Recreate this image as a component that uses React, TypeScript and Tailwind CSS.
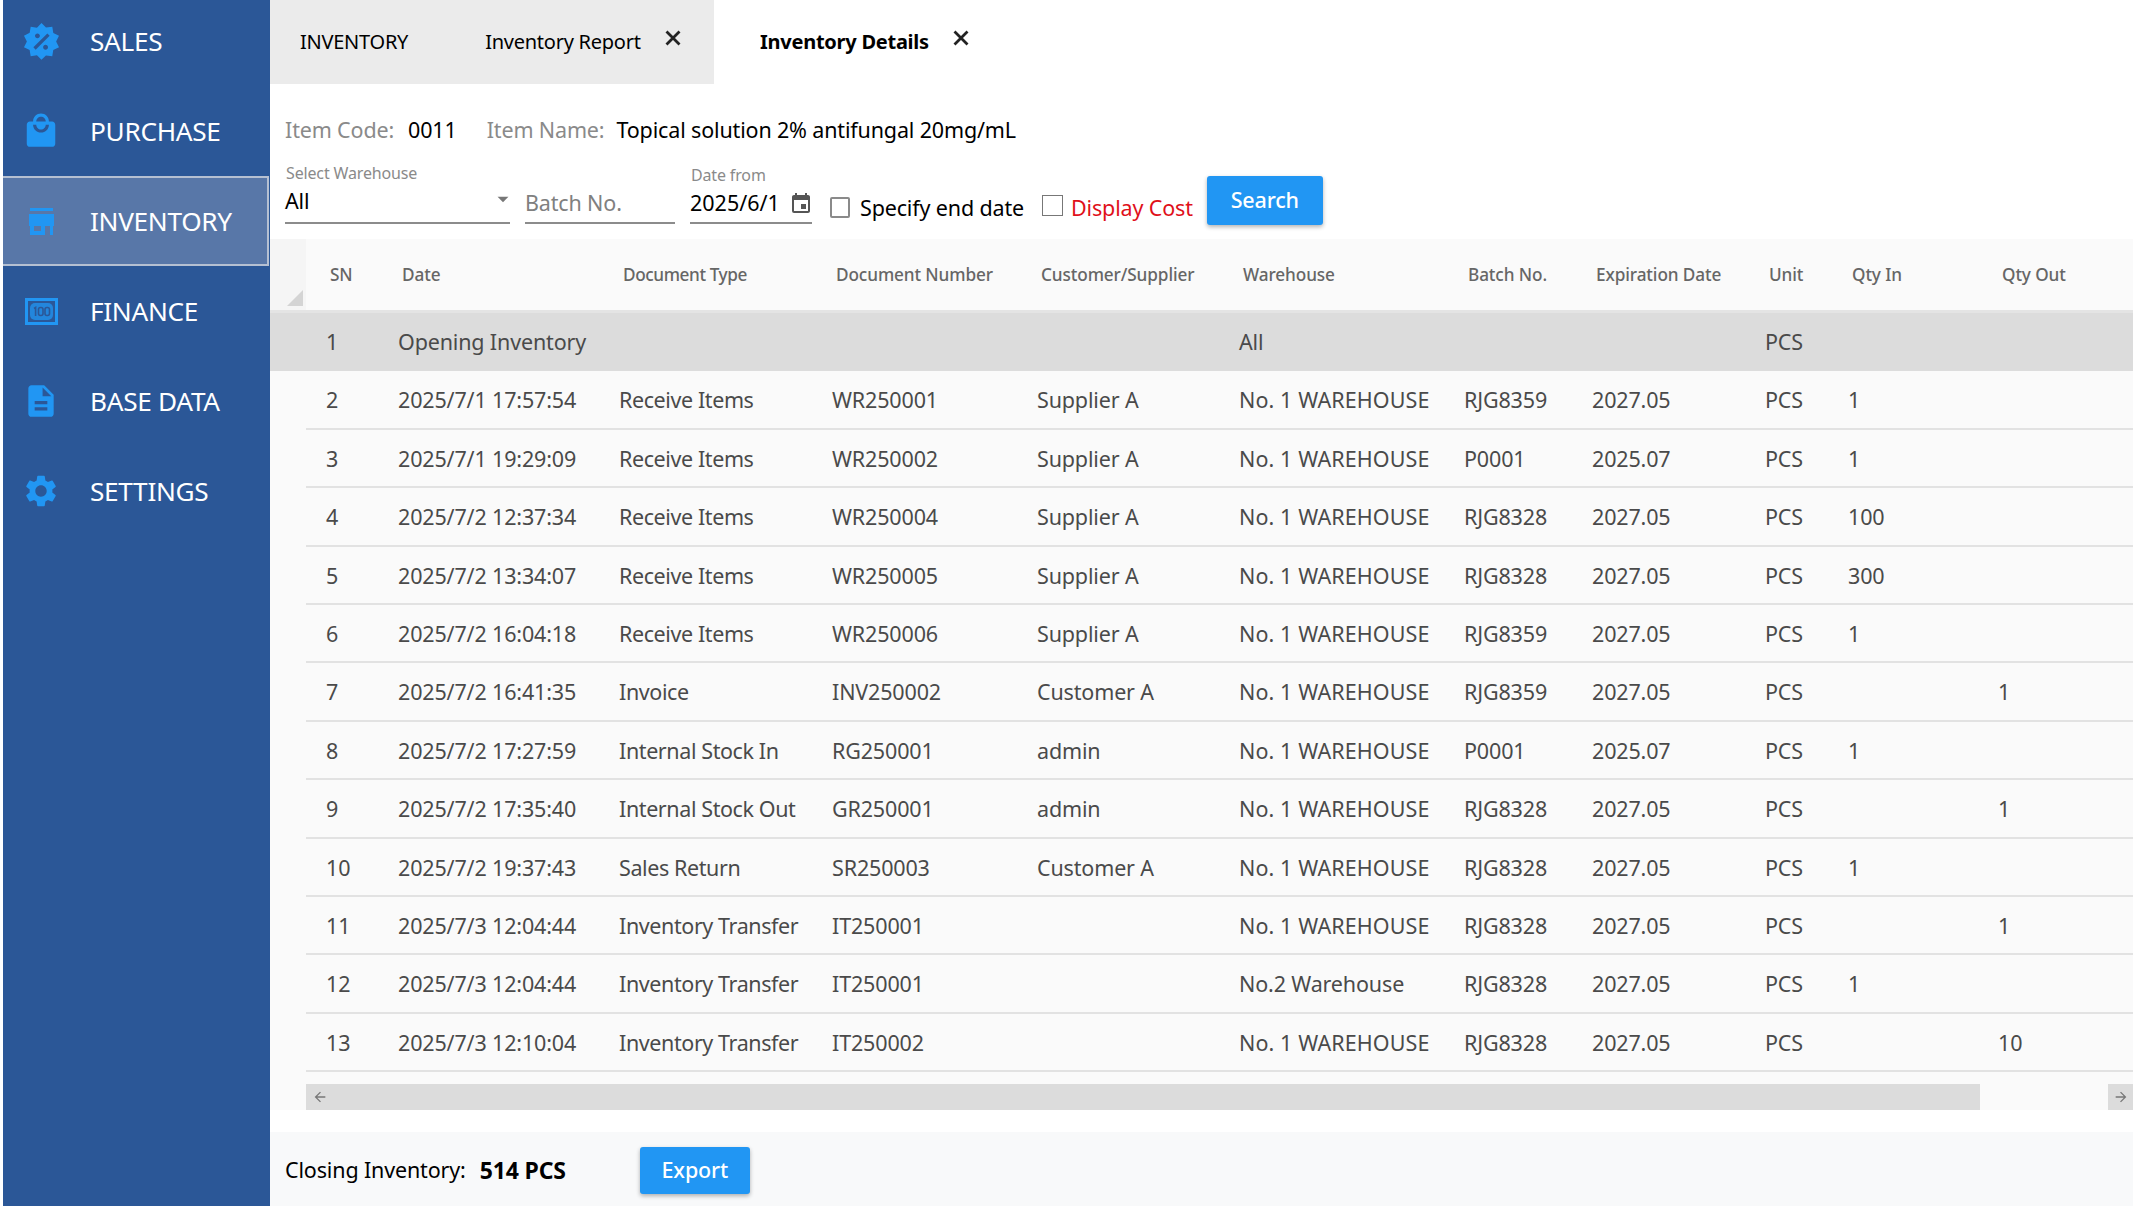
import { ReactNode } from 'react';
import { MdLocalMall, MdDescription, MdSettings, MdEvent, MdArrowDropDown, MdArrowBack, MdArrowForward } from 'react-icons/md';

function SaleIcon({ className }: { className?: string }) {
  return (
    <svg viewBox="0 0 24 24" className={className} fill="currentColor">
      <path d="M18.65 2.85L19.26 6.71L22.77 8.5L21 12L22.78 15.5L19.24 17.29L18.63 21.15L14.74 20.54L11.97 23.3L9.19 20.5L5.33 21.14L4.71 17.25L1.22 15.47L3 11.97L1.23 8.5L4.74 6.69L5.35 2.87L9.22 3.5L12 .69L14.77 3.46L18.65 2.85M9.5 7C8.67 7 8 7.67 8 8.5S8.67 10 9.5 10 11 9.33 11 8.5 10.33 7 9.5 7M14.5 14C13.67 14 13 14.67 13 15.5S13.67 17 14.5 17 16 16.33 16 15.5 15.33 14 14.5 14M8.41 17L17 8.41L15.59 7L7 15.59L8.41 17Z" />
    </svg>
  );
}

function StoreIcon({ className }: { className?: string }) {
  return (
    <svg viewBox="0 0 25 27" className={className} fill="currentColor" fillRule="evenodd">
      <path d="M1 0h23v3H1z M0 6h25v12h-1v9h-3v-9h-5v9H1v-9H0z M5 18v5h7v-5z" />
    </svg>
  );
}

function MoneyIcon({ className }: { className?: string }) {
  return (
    <svg viewBox="0 0 33 27" className={className}>
      <path fill="currentColor" fillRule="evenodd" d="M0 0h33v27H0z M3 3v21h27V3z" />
      <rect x="5" y="5" width="23" height="17" rx="5" fill="currentColor" opacity="0.75" />
      <g fill="none" stroke="#2b5797" strokeWidth="1.6">
        <path d="M9 10.5l1.6-1v8.500" />
        <rect x="13.500" y="9.500" width="4.500" height="8" rx="2" />
        <rect x="20" y="9.500" width="4.500" height="8" rx="2" />
      </g>
    </svg>
  );
}

function CloseIcon() {
  return (
    <svg viewBox="0 0 24 24" className="ml-[20px] -mt-[8px] w-[24px] h-[24px]" fill="none" stroke="#222" strokeWidth="2.8">
      <path d="M5.500 5.500l13 13M18.500 5.500l-13 13" />
    </svg>
  );
}

const navItems = [
  { label: 'SALES', icon: <SaleIcon className="w-[39px] h-[39px]" /> },
  { label: 'PURCHASE', icon: <MdLocalMall className="w-[38px] h-[38px]" /> },
  { label: 'INVENTORY', icon: <StoreIcon className="w-[25px] h-[27px]" />, active: true },
  { label: 'FINANCE', icon: <MoneyIcon className="w-[33px] h-[27px]" /> },
  { label: 'BASE DATA', icon: <MdDescription className="w-[38px] h-[38px]" /> },
  { label: 'SETTINGS', icon: <MdSettings className="w-[38px] h-[38px]" /> },
];

const columns = ['SN', 'Date', 'Document Type', 'Document Number', 'Customer/Supplier', 'Warehouse', 'Batch No.', 'Expiration Date', 'Unit', 'Qty In', 'Qty Out'];

const wh1 = 'No. 1 WAREHOUSE';
const rows = [
  ['2', '2025/7/1 17:57:54', 'Receive Items', 'WR250001', 'Supplier A', wh1, 'RJG8359', '2027.05', 'PCS', '1', ''],
  ['3', '2025/7/1 19:29:09', 'Receive Items', 'WR250002', 'Supplier A', wh1, 'P0001', '2025.07', 'PCS', '1', ''],
  ['4', '2025/7/2 12:37:34', 'Receive Items', 'WR250004', 'Supplier A', wh1, 'RJG8328', '2027.05', 'PCS', '100', ''],
  ['5', '2025/7/2 13:34:07', 'Receive Items', 'WR250005', 'Supplier A', wh1, 'RJG8328', '2027.05', 'PCS', '300', ''],
  ['6', '2025/7/2 16:04:18', 'Receive Items', 'WR250006', 'Supplier A', wh1, 'RJG8359', '2027.05', 'PCS', '1', ''],
  ['7', '2025/7/2 16:41:35', 'Invoice', 'INV250002', 'Customer A', wh1, 'RJG8359', '2027.05', 'PCS', '', '1'],
  ['8', '2025/7/2 17:27:59', 'Internal Stock In', 'RG250001', 'admin', wh1, 'P0001', '2025.07', 'PCS', '1', ''],
  ['9', '2025/7/2 17:35:40', 'Internal Stock Out', 'GR250001', 'admin', wh1, 'RJG8328', '2027.05', 'PCS', '', '1'],
  ['10', '2025/7/2 19:37:43', 'Sales Return', 'SR250003', 'Customer A', wh1, 'RJG8328', '2027.05', 'PCS', '1', ''],
  ['11', '2025/7/3 12:04:44', 'Inventory Transfer', 'IT250001', '', wh1, 'RJG8328', '2027.05', 'PCS', '', '1'],
  ['12', '2025/7/3 12:04:44', 'Inventory Transfer', 'IT250001', '', 'No.2 Warehouse', 'RJG8328', '2027.05', 'PCS', '1', ''],
  ['13', '2025/7/3 12:10:04', 'Inventory Transfer', 'IT250002', '', wh1, 'RJG8328', '2027.05', 'PCS', '', '10'],
];

const gridCls = 'grid grid-cols-[72px_221px_213px_205px_202px_225px_128px_173px_83px_150px_1fr] items-center';

function Cells({ values }: { values: string[] }) {
  return (
    <>
      {values.map((v, i) => (
        <div
          key={i}
          className={`whitespace-nowrap ${i === 2 ? 'tracking-[-0.4px]' : ''} ${v === wh1 ? 'tracking-[0.1px]' : ''}`}
        >
          {v}
        </div>
      ))}
    </>
  );
}

function Underlined({ children, className }: { children: ReactNode; className: string }) {
  return <div className={`border-b-2 border-[#8c8c8c] flex items-center ${className}`}>{children}</div>;
}

export default function App() {
  return (
    <div className="flex h-[1206px] w-[2133px] overflow-hidden bg-white text-[21.5px] tracking-[-0.15px] text-black [font-family:'Noto_Sans',sans-serif]">
      <div className="w-[267px] ml-[3px] shrink-0 bg-[#2b5797] text-white text-[26.2px] tracking-[-0.3px]">
        <div className="-mt-[4px]">
          {navItems.map((item) => (
            <div
              key={item.label}
              className={`h-[90px] flex items-center ${item.active ? 'bg-[#5877a8] border-y-2 border-r-2 border-[#b5c0d2] mr-[1px]' : ''}`}
            >
              <div className="w-[87px] flex justify-center pr-[11px] text-[#2196f3]">{item.icon}</div>
              <span className="pt-[2px]">{item.label}</span>
            </div>
          ))}
        </div>
      </div>

      <div className="flex-1 min-w-0 flex flex-col">
        <div className="h-[84px] flex shrink-0 text-[20px] tracking-[-0.25px]">
          <div className="w-[444px] bg-[#ebebeb] flex items-center pl-[30px]">
            <span>INVENTORY</span>
            <span className="ml-[77px]">Inventory Report</span>
            <CloseIcon />
          </div>
          <div className="flex items-center pl-[46px] font-bold">
            <span>Inventory Details</span>
            <CloseIcon />
          </div>
        </div>

        <div className="h-[155px] shrink-0 pl-[15px]">
          <div className="flex items-center h-[32px] mt-[30px]">
            <span className="text-[#8a8a8a]">Item Code:</span>
            <span className="ml-[14px]">0011</span>
            <span className="ml-[30px] text-[#8a8a8a]">Item Name:</span>
            <span className="ml-[12px]">Topical solution 2% antifungal 20mg/mL</span>
          </div>
          <div className="flex items-end mt-[2px] h-[76px]">
            <div className="w-[225px]">
              <div className="text-[16px] text-[#8a8a8a] leading-[20px] pl-[1px] pb-[1px]">Select Warehouse</div>
              <Underlined className="justify-between h-[40px]">
                <span className="-mt-[3px]">All</span>
                <MdArrowDropDown className="w-[26px] h-[26px] text-[#777] -mt-[8px] -mr-[6px]" />
              </Underlined>
            </div>
            <Underlined className="w-[150px] h-[40px] ml-[15px] text-[#808080]">Batch No.</Underlined>
            <div className="w-[122px] ml-[15px]">
              <div className="text-[16px] text-[#8a8a8a] leading-[20px] pl-[1px]">Date from</div>
              <Underlined className="justify-between h-[39px] tracking-[0px]">
                <span>2025/6/1</span>
                <MdEvent className="w-[24px] h-[24px] text-[#555] -mr-[1px]" />
              </Underlined>
            </div>
            <div className="flex items-center h-[36px] ml-[18px] -mb-[1px]">
              <div className="w-[20px] h-[21px] border-2 border-[#8a8a8a] rounded-[2px]" />
              <span className="ml-[10px] pt-[3px]">Specify end date</span>
              <div className="w-[21px] h-[21px] border border-[#777] ml-[18px] -mt-[3px]" />
              <span className="ml-[8px] pt-[3px] text-[#e0101a]">Display Cost</span>
            </div>
            <button className="w-[116px] h-[49px] ml-[14px] -mb-[1px] rounded-[3px] bg-[#2196f3] text-white font-medium shadow-[0_2px_4px_rgba(0,0,0,0.3)]">
              Search
            </button>
          </div>
        </div>

        <div className="bg-[#fafafa] text-[#4a4a4a] shrink-0">
          <div className="flex h-[74px] border-b-[3px] border-[#e4e4e4]">
            <div className="w-[36px] flex items-end justify-end pb-[4px] pr-[3px] bg-[#f5f5f5]">
              <svg viewBox="0 0 16 16" className="w-[16px] h-[16px]" fill="#d4d4d4"><path d="M16 0V16H0Z" /></svg>
            </div>
            <div className={`${gridCls} flex-1 pl-[24px] pt-[1px] text-[17.2px] tracking-[-0.1px] font-medium text-[#666]`}>
              <Cells values={columns} />
            </div>
          </div>

          <div className={`${gridCls} h-[58.4px] pl-[56px] bg-[#dcdcdc]`}>
            <Cells values={['1', 'Opening Inventory', '', '', '', 'All', '', '', 'PCS', '', '']} />
          </div>
          {rows.map((row) => (
            <div key={row[0]} className={`${gridCls} h-[58.4px] ml-[36px] pl-[20px] pt-[2px] border-b-2 border-[#e2e2e2]`}>
              <Cells values={row} />
            </div>
          ))}

          <div className="flex h-[26px] ml-[36px] mt-[12px] text-[#777]">
            <div className="w-[1674px] bg-[#dcdcdc] flex items-center pl-[6px]">
              <MdArrowBack className="w-[16px] h-[16px]" />
            </div>
            <div className="ml-auto w-[25px] bg-[#dcdcdc] flex items-center justify-center">
              <MdArrowForward className="w-[16px] h-[16px]" />
            </div>
          </div>
        </div>

        <div className="mt-[22px] flex-1 bg-[#f8f9fa] flex items-center pl-[15px] pt-[2px]">
          <span>Closing Inventory:</span>
          <span className="ml-[14px] font-bold text-[23px]">514 PCS</span>
          <button className="w-[110px] h-[47px] ml-[74px] rounded-[3px] bg-[#2196f3] text-white font-medium shadow-[0_2px_4px_rgba(0,0,0,0.3)]">
            Export
          </button>
        </div>
      </div>
    </div>
  );
}
